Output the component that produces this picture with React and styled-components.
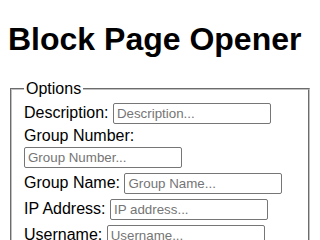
import React from "react";
import styled, { createGlobalStyle } from "styled-components";

const Global = createGlobalStyle`
  html, body {
    margin: 0;
    padding: 0;
  }
  body {
    font-family: "Liberation Sans", Arial, sans-serif;
    font-size: 16px;
    color: #000;
    background: #fff;
  }
`;

const Page = styled.main`
  display: block;
  padding: 0 8px 8px;
`;

const Title = styled.h1`
  font-size: 32px;
  font-weight: bold;
  line-height: normal;
  margin: 0 0 21.44px;
  padding-top: 21.44px;
`;

const Options = styled.fieldset`
  margin: 0 2px;
  padding: 3.6px 12px 10px;
  border: 2px groove rgb(192, 192, 192);
`;

const Legend = styled.legend`
  padding: 0 2px;
`;

const Row = styled.div`
  display: flex;
  flex-wrap: wrap;
  align-items: baseline;
  column-gap: 4.45px;
`;

const Label = styled.label`
  line-height: normal;
`;

const Field = styled.input`
  box-sizing: border-box;
  width: 158px;
  height: 21px;
  margin: 2px 0 3px;
  padding: 1px 3px;
  border: 1px solid #767676;
  border-radius: 2px;
  font-family: "Liberation Sans", Arial, sans-serif;
  font-size: 13.333px;
  &::placeholder {
    color: #757575;
  }
`;

const fields = [
  ["desc", "Description:", "Description..."],
  ["gnum", "Group Number:", "Group Number..."],
  ["gname", "Group Name:", "Group Name..."],
  ["ip", "IP Address:", "IP address..."],
  ["user", "Username:", "Username..."],
];

export default function App() {
  return (
    <Page>
      <Global />
      <Title>Block Page Opener</Title>
      <Options>
        <Legend>Options</Legend>
        {fields.map(([id, label, ph]) => (
          <Row key={id}>
            <Label htmlFor={id}>{label}</Label>
            <Field id={id} type="text" placeholder={ph} />
          </Row>
        ))}
      </Options>
    </Page>
  );
}
